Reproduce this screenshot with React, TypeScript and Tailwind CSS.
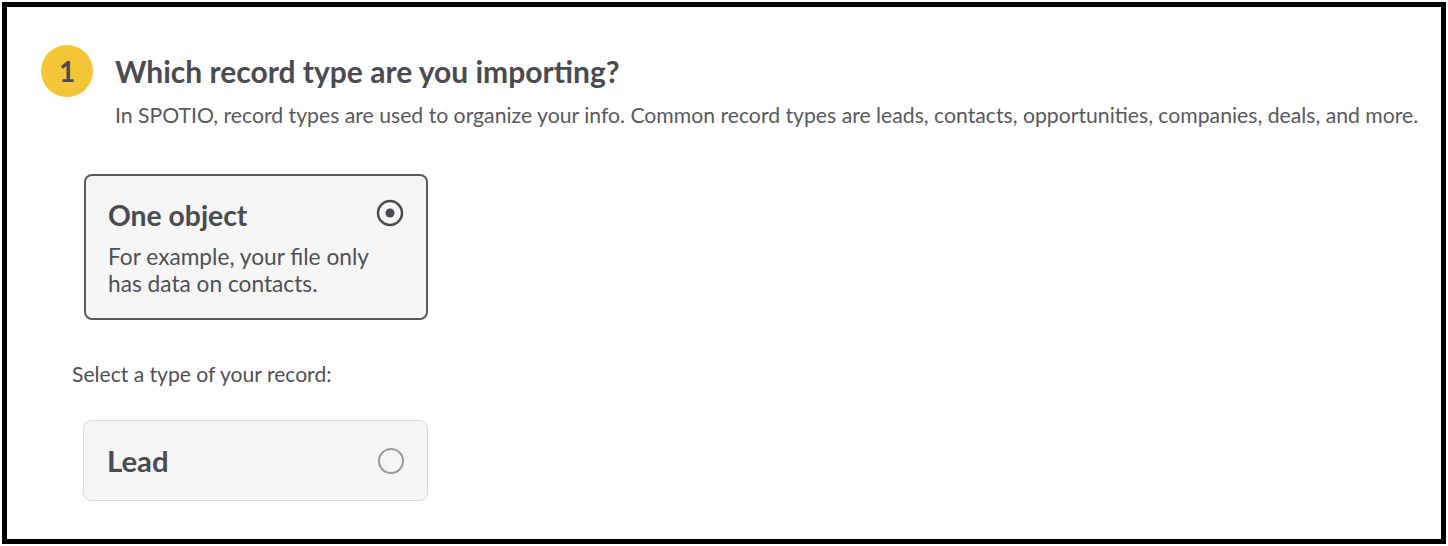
const RadioOn = () => (
  <svg width="28" height="28" viewBox="0 0 28 28" fill="none">
    <circle cx="14" cy="14" r="12" stroke="#4a4b50" strokeWidth="2.5" />
    <circle cx="14" cy="14" r="4.5" fill="#4a4b50" />
  </svg>
)

const RadioOff = () => (
  <svg width="28" height="28" viewBox="0 0 28 28" fill="none">
    <circle cx="14" cy="14" r="12" stroke="#9a9a9a" strokeWidth="2" />
  </svg>
)

const App = () => {
  return (
    <div className="w-[1448px] h-[546px] bg-white p-[2px] font-['Lato','Open_Sans',sans-serif] text-[#4a4b50]">
      <div className="w-[1444px] h-[542px] border-[5px] border-black bg-white">
        <div className="flex items-start pl-[34px] pt-[38px]">
          <div className="w-[52px] h-[52px] rounded-full bg-[#f4c537] flex items-center justify-center text-[28px] font-bold text-[#4a4b50]">
            1
          </div>
          <div className="ml-[22px] pt-[8px]">
            <h1 className="text-[30px] font-bold leading-[36px] text-[#4a4b50]">Which record type are you importing?</h1>
            <p className="mt-[12px] text-[21.2px] leading-[28px] text-[#58595c]">
              In SPOTIO, record types are used to organize your info. Common record types are leads, contacts, opportunities, companies, deals, and more.
            </p>
          </div>
        </div>

        <div className="ml-[77px] mt-[45px] w-[344px] h-[146px] rounded-[8px] border-2 border-[#5a5a5e] bg-[#f6f6f6] px-[22px] pt-[22px] flex justify-between">
          <div>
            <div className="text-[28.3px] font-bold leading-[34px]">One object</div>
            <div className="mt-[11px] text-[22.7px] leading-[27px] text-[#4f5054]">
              For example, your file only
              <br />
              has data on contacts.
            </div>
          </div>
          <div className="pt-[1px]">
            <RadioOn />
          </div>
        </div>

        <div className="ml-[65px] mt-[41px] text-[21.1px] leading-[26px] text-[#4f5054]">Select a type of your record:</div>

        <div className="ml-[76px] mt-[33px] w-[345px] h-[81px] rounded-[8px] border border-[#dcdcdc] bg-[#f6f6f6] pl-[23px] pr-[22px] flex items-center justify-between">
          <div className="text-[29.3px] font-bold leading-[34px]">Lead</div>
          <RadioOff />
        </div>
      </div>
    </div>
  )
}

export default App
